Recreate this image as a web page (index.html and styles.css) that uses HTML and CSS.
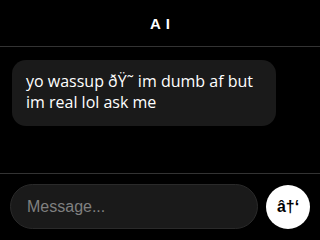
FILE: index.html
```html
<!DOCTYPE html>
<html lang="en">
<head>
  <meta charset="UTF-8" />
  <meta name="viewport" content="width=device-width, initial-scale=1.0"/>
  <title>AI</title>
  <link rel="stylesheet" href="styles.css">
</head>
<body>
  <div id="chat">
    <header class="chat-header">AI</header>

    <div class="messages">
      <div class="bubble">yo wassup ðŸ˜ im dumb af but im real lol ask me</div>
    </div>

    <form class="composer">
      <input type="text" class="msg-input" placeholder="Message...">
      <button type="submit" class="send-btn">â†‘</button>
    </form>
  </div>
</body>
</html>
```
FILE: styles.css
```css
body {
  margin: 0;
  background-color: #000;
  color: #fff;
  font-family: "Liberation Sans", Arial, sans-serif;
}

#chat {
  display: flex;
  flex-direction: column;
  height: 240px;
}

.chat-header {
  display: flex;
  align-items: center;
  justify-content: center;
  font-weight: bold;
  font-size: 15px;
  letter-spacing: 5px;
  border-bottom: 1px solid #333;
  box-sizing: border-box;
  height: 47px;
  padding-left: 5px;
}

.messages {
  flex: 1;
  padding: 13px 12px;
}

.bubble {
  background: #1a1a1a;
  border-radius: 14px;
  padding: 11px 14px 13px;
  width: 236px;
  font-family: "Open Sans", sans-serif;
  font-size: 16px;
  line-height: 21px;
}

.composer {
  display: flex;
  align-items: center;
  gap: 8px;
  padding: 10px 10px 11px;
  border-top: 1px solid #333;
  margin: 0;
}

.msg-input {
  flex: 1;
  height: 45px;
  box-sizing: border-box;
  background: #1a1a1a;
  border: 1px solid #2a2a2a;
  border-radius: 23px;
  padding: 0 16px;
  color: #fff;
  font-size: 16px;
  font-family: "Liberation Sans", Arial, sans-serif;
  outline: none;
}

.msg-input::placeholder {
  color: #808080;
}

.send-btn {
  width: 44px;
  height: 44px;
  border-radius: 50%;
  border: none;
  background: #fff;
  color: #000;
  font-weight: bold;
  font-size: 16px;
  font-family: "Liberation Sans", Arial, sans-serif;
  padding: 0;
  cursor: pointer;
}
```
